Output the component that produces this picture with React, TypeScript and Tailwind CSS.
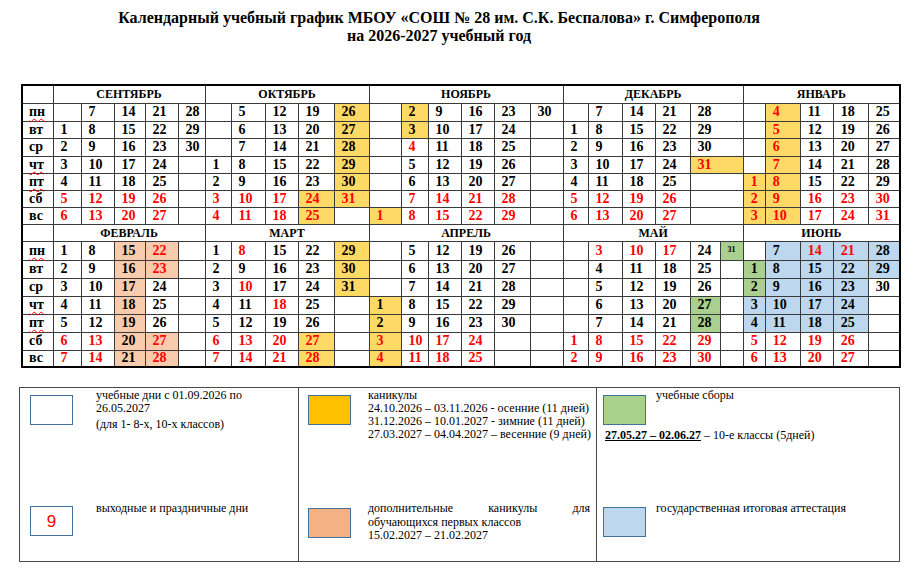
import React from 'react'

type Month = { name: string; weeks: string[][]; spans?: number[] }

// widths of the grid columns, label column first
const COL_WIDTHS = [
  'w-[31px]',
  'w-[28px]', 'w-[33px]', 'w-[31px]', 'w-[33px]', 'w-[27px]',
  'w-[26px]', 'w-[34px]', 'w-[33px]', 'w-[36px]', 'w-[35px]',
  'w-[32px]', 'w-[27px]', 'w-[33px]', 'w-[33px]', 'w-[36px]', 'w-[33px]',
  'w-[25px]', 'w-[34px]', 'w-[33px]', 'w-[35px]', 'w-[30px]', 'w-[23px]',
  'w-[22px]', 'w-[35px]', 'w-[33px]', 'w-[35px]', 'w-[32px]',
]

const GROUP_SPANS = [5, 5, 6, 6, 5]
const DAYS = ['пн', 'вт', 'ср', 'чт', 'пт', 'сб', 'вс']
const MARKED = [true, false, false, true, true, false, false]

const BG: Record<string, string> = {
  y: 'bg-[#ffd966]',
  p: 'bg-[#f8cbad]',
  g: 'bg-[#a9d08e]',
  b: 'bg-[#bdd7ee]',
}

const E = ['', '', '', '', '', '', '']

const TOP: Month[] = [
  {
    name: 'СЕНТЯБРЬ',
    weeks: [
      ['', '1', '2', '3', '4', '5r', '6r'],
      ['7', '8', '9', '10', '11', '12r', '13r'],
      ['14', '15', '16', '17', '18', '19r', '20r'],
      ['21', '22', '23', '24', '25', '26r', '27r'],
      ['28', '29', '30', '', '', '', ''],
    ],
  },
  {
    name: 'ОКТЯБРЬ',
    weeks: [
      ['', '', '', '1', '2', '3r', '4r'],
      ['5', '6', '7', '8', '9', '10r', '11r'],
      ['12', '13', '14', '15', '16', '17r', '18r'],
      ['19', '20', '21', '22', '23', '24ry', '25ry'],
      ['26y', '27y', '28y', '29y', '30y', '31ry', ''],
    ],
  },
  {
    name: 'НОЯБРЬ',
    weeks: [
      ['', '', '', '', '', '', '1ry'],
      ['2y', '3y', '4r', '5', '6', '7r', '8r'],
      ['9', '10', '11', '12', '13', '14r', '15r'],
      ['16', '17', '18', '19', '20', '21r', '22r'],
      ['23', '24', '25', '26', '27', '28r', '29r'],
      ['30', '', '', '', '', '', ''],
    ],
  },
  {
    name: 'ДЕКАБРЬ',
    spans: [1, 1, 1, 1, 2],
    weeks: [
      ['', '1', '2', '3', '4', '5r', '6r'],
      ['7', '8', '9', '10', '11', '12r', '13r'],
      ['14', '15', '16', '17', '18', '19r', '20r'],
      ['21', '22', '23', '24', '25', '26r', '27r'],
      ['28', '29', '30', '31ry', '', '', ''],
    ],
  },
  {
    name: 'ЯНВАРЬ',
    weeks: [
      ['', '', '', '', '1ry', '2ry', '3ry'],
      ['4ry', '5ry', '6ry', '7ry', '8ry', '9ry', '10ry'],
      ['11', '12', '13', '14', '15', '16r', '17r'],
      ['18', '19', '20', '21', '22', '23r', '24r'],
      ['25', '26', '27', '28', '29', '30r', '31r'],
    ],
  },
]

const BOTTOM: Month[] = [
  {
    name: 'ФЕВРАЛЬ',
    weeks: [
      ['1', '2', '3', '4', '5', '6r', '7r'],
      ['8', '9', '10', '11', '12', '13r', '14r'],
      ['15p', '16p', '17p', '18p', '19p', '20p', '21p'],
      ['22rp', '23rp', '24', '25', '26', '27rp', '28rp'],
      E,
    ],
  },
  {
    name: 'МАРТ',
    weeks: [
      ['1', '2', '3', '4', '5', '6r', '7r'],
      ['8r', '9', '10r', '11', '12', '13r', '14r'],
      ['15', '16', '17', '18r', '19', '20r', '21r'],
      ['22', '23', '24', '25', '26', '27ry', '28ry'],
      ['29y', '30y', '31y', '', '', '', ''],
    ],
  },
  {
    name: 'АПРЕЛЬ',
    weeks: [
      ['', '', '', '1y', '2y', '3ry', '4ry'],
      ['5', '6', '7', '8', '9', '10r', '11r'],
      ['12', '13', '14', '15', '16', '17r', '18r'],
      ['19', '20', '21', '22', '23', '24r', '25r'],
      ['26', '27', '28', '29', '30', '', ''],
      E,
    ],
  },
  {
    name: 'МАЙ',
    weeks: [
      ['', '', '', '', '', '1r', '2r'],
      ['3r', '4', '5', '6', '7', '8r', '9r'],
      ['10r', '11', '12', '13', '14', '15r', '16r'],
      ['17r', '18', '19', '20', '21', '22r', '23r'],
      ['24', '25', '26', '27g', '28g', '29r', '30r'],
      ['31gs', '', '', '', '', '', ''],
    ],
  },
  {
    name: 'ИЮНЬ',
    weeks: [
      ['', '1g', '2g', '3b', '4b', '5r', '6r'],
      ['7b', '8b', '9b', '10b', '11b', '12r', '13r'],
      ['14rb', '15b', '16b', '17b', '18b', '19r', '20r'],
      ['21rb', '22b', '23b', '24b', '25b', '26r', '27r'],
      ['28b', '29b', '30', '', '', '', ''],
    ],
  },
]

const TOP_ROWS = ['h-[18px]', 'h-[17px]', 'h-[18px]', 'h-[17px]', 'h-[17px]', 'h-[17px]', 'h-[17px]']
const BOTTOM_ROWS = ['h-[19px]', 'h-[18px]', 'h-[18px]', 'h-[18px]', 'h-[18px]', 'h-[18px]', 'h-[17px]']

function DayCell({ value, span }: { value: string; span: number }) {
  const m = value.match(/^(\d*)([a-z]*)$/)
  const num = m ? m[1] : ''
  const flags = m ? m[2] : ''
  const bg = flags.split('').map((f) => BG[f]).find(Boolean) || ''
  const red = flags.includes('r')
  const small = flags.includes('s')

  if (small) {
    return (
      <td colSpan={span} className={`border border-[#3a3a3a] align-top pl-[7px] pt-[4px] text-[8px] leading-[8px] font-bold ${bg}`}>
        {num}
      </td>
    )
  }

  return (
    <td
      colSpan={span}
      className={`border border-[#3a3a3a] pl-[7px] p-0 text-[14px] leading-[14px] font-bold whitespace-nowrap ${bg} ${red ? 'text-[#ff0000]' : 'text-black'}`}
    >
      {num}
    </td>
  )
}

function Half({ months, heights, headH }: { months: Month[]; heights: string[]; headH: string }) {
  return (
    <>
      <tr className={headH}>
        <td className="border border-[#3a3a3a]"></td>
        {months.map((mo, i) => (
          <td key={mo.name} colSpan={GROUP_SPANS[i]} className="border border-[#3a3a3a] text-center text-[12px] leading-[12px] font-bold">
            {mo.name}
          </td>
        ))}
      </tr>
      {DAYS.map((day, r) => (
        <tr key={day} className={heights[r]}>
          <td className="border border-[#3a3a3a] pl-[6px] text-[14px] leading-[14px] font-bold">
            <span className={MARKED[r] ? 'underline decoration-wavy decoration-[#ff0000] decoration-1 underline-offset-2' : ''}>{day}</span>
          </td>
          {months.map((mo) =>
            mo.weeks.map((w, c) => (
              <DayCell key={`${mo.name}-${c}`} value={w[r]} span={mo.spans ? mo.spans[c] : 1} />
            ))
          )}
        </tr>
      ))}
    </>
  )
}

function Swatch({ color, children }: { color: string; children?: React.ReactNode }) {
  return (
    <div className={`w-[43px] h-[30px] shrink-0 border border-[#41719c] flex items-center justify-center ${color}`}>
      {children}
    </div>
  )
}

export default function App() {
  return (
    <div className="w-[919px] h-[570px] bg-white text-black font-['Liberation_Serif','Times_New_Roman',serif] overflow-hidden">
      <div className="w-[878px] pt-[9px] text-center text-[16px] leading-[18px] font-bold">
        Календарный учебный график МБОУ «СОШ № 28 им. С.К. Беспалова» г. Симферополя
        <br />
        на 2026-2027 учебный год
      </div>

      <div className="pl-[21px] mt-[39px]">
        <table className="table-fixed w-[878px] border-collapse border-2 border-black">
          <colgroup>
            {COL_WIDTHS.map((w, i) => (
              <col key={i} className={w} />
            ))}
          </colgroup>
          <tbody>
            <Half months={TOP} heights={TOP_ROWS} headH="h-[18px]" />
            <Half months={BOTTOM} heights={BOTTOM_ROWS} headH="h-[17px]" />
          </tbody>
        </table>
      </div>

      {/* Legend */}
      <div className="ml-[19px] mt-[19px] w-[881px] h-[175px] border border-[#4a4a4a] flex text-[12px]">
        <div className="w-[279px] border-r border-[#4a4a4a] flex flex-col">
          <div className="h-[113px] flex pl-[10px]">
            <div className="mt-[7px]">
              <Swatch color="bg-white" />
            </div>
            <div className="ml-[23px] pt-[1px] leading-[13px]">
              <div>учебные дни с 01.09.2026 по</div>
              <div>26.05.2027</div>
              <div className="mt-[3px]">(для 1- 8-х, 10-х классов)</div>
            </div>
          </div>
          <div className="flex pl-[10px]">
            <div className="mt-[5px]">
              <Swatch color="bg-white">
                <span className="font-['Liberation_Sans',Arial,sans-serif] text-[17px] leading-none text-[#ff0000]">9</span>
              </Swatch>
            </div>
            <div className="ml-[23px] pt-[1px] leading-[13px]">выходные и праздничные дни</div>
          </div>
        </div>

        <div className="w-[298px] border-r border-[#4a4a4a] flex flex-col">
          <div className="h-[113px] flex pl-[9px]">
            <div className="mt-[7px]">
              <Swatch color="bg-[#ffc000]" />
            </div>
            <div className="ml-[17px] pt-[1px] leading-[13px] whitespace-nowrap">
              <div>каникулы</div>
              <div>24.10.2026 – 03.11.2026 - осенние (11 дней)</div>
              <div>31.12.2026 – 10.01.2027 - зимние (11 дней)</div>
              <div>27.03.2027 – 04.04.2027 – весенние (9 дней)</div>
            </div>
          </div>
          <div className="flex pl-[9px]">
            <div className="mt-[7px]">
              <Swatch color="bg-[#f4b183]" />
            </div>
            <div className="ml-[17px] w-[222px] pt-[1px] leading-[13.5px] whitespace-nowrap">
              <div className="flex justify-between">
                <span>дополнительные</span>
                <span>каникулы</span>
                <span>для</span>
              </div>
              <div>обучающихся первых классов</div>
              <div>15.02.2027 – 21.02.2027</div>
            </div>
          </div>
        </div>

        <div className="flex-1 flex flex-col">
          <div className="h-[113px] flex flex-col">
            <div className="flex pl-[6px]">
              <div className="mt-[7px]">
                <Swatch color="bg-[#a9d18e]" />
              </div>
              <div className="ml-[10px] pt-[1px] leading-[13px]">учебные сборы</div>
            </div>
            <div className="pl-[8px] mt-[4px] leading-[13px] whitespace-nowrap">
              <span className="font-bold underline">27.05.27 – 02.06.27</span> – 10-е классы (5дней)
            </div>
          </div>
          <div className="flex pl-[6px]">
            <div className="mt-[6px]">
              <Swatch color="bg-[#bdd7ee]" />
            </div>
            <div className="ml-[10px] pt-[1px] leading-[13px]">государственная итоговая аттестация</div>
          </div>
        </div>
      </div>
    </div>
  )
}
